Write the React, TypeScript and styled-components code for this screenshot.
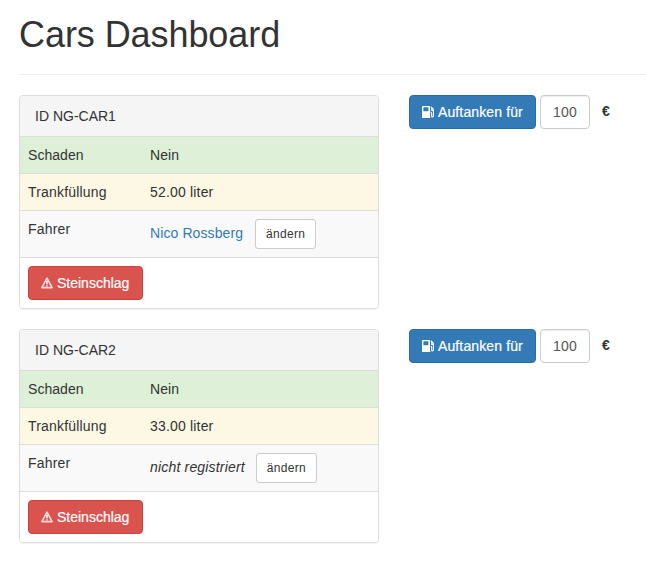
import React from 'react';
import styled, { createGlobalStyle, css } from 'styled-components';

const GlobalStyle = createGlobalStyle`
  *, *::before, *::after { box-sizing: border-box; }
  body {
    margin: 0;
    background: #fff;
    color: #333;
    font: 14px/20px "Liberation Sans", Arial, sans-serif;
    overflow: hidden;
  }
`;

const Page = styled.main`
  padding: 15px 0 0 19px;
`;

const PageHeader = styled.header`
  height: 60px;
  border-bottom: 1px solid #eee;
  margin-bottom: 20px;
`;

const Title = styled.h1`
  margin: 0;
  font-size: 36px;
  font-weight: 400;
  line-height: 40px;
  letter-spacing: -0.07px;
`;

const CarRow = styled.section`
  display: flex;
  align-items: flex-start;
  gap: 30px;
  margin-bottom: 20px;
`;

const Panel = styled.article`
  width: 360px;
  border: 1px solid #ddd;
  border-radius: 4px;
  box-shadow: 0 1px 1px rgba(0, 0, 0, 0.05);
  overflow: hidden;
`;

const PanelHeading = styled.div`
  height: 40px;
  padding: 10px 15px;
  background: #f5f5f5;
`;

type Tone = 'success' | 'warning' | 'striped' | 'plain';

const toneColor: Record<Tone, string> = {
  success: '#dff0d8',
  warning: '#fcf8e3',
  striped: '#f9f9f9',
  plain: '#fff',
};

const TableRow = styled.div<{ $tone: Tone }>`
  display: grid;
  grid-template-columns: 122px 1fr;
  padding: 8px;
  border-top: 1px solid #ddd;
  background: ${({ $tone }) => toneColor[$tone]};
  letter-spacing: ${({ $tone }) => ($tone === 'success' ? '0.05px' : '0.18px')};
`;

const DriverCell = styled.div`
  display: flex;
  align-items: center;
  height: 30px;
`;

const DriverLink = styled.a`
  margin: 0 12px 2px 0;
  color: #337ab7;
  text-decoration: none;
  letter-spacing: 0.1px;
`;

const Unregistered = styled.em`
  margin: 0 11px 2px 0;
  letter-spacing: 0.18px;
`;

const buttonText = css`
  font-family: inherit;
  white-space: nowrap;
  cursor: pointer;
`;

const SmallButton = styled.button`
  ${buttonText}
  width: 61px;
  height: 30px;
  padding: 0;
  border: 1px solid #ccc;
  border-radius: 3px;
  background: #fff;
  color: #333;
  font-size: 12px;
  letter-spacing: 0.3px;
`;

const ActionButton = styled.button<{ $kind: 'primary' | 'danger' }>`
  ${buttonText}
  display: flex;
  align-items: center;
  gap: 4px;
  width: ${({ $kind }) => ($kind === 'primary' ? 127 : 115)}px;
  height: 34px;
  padding: 0 12px;
  border: 1px solid ${({ $kind }) => ($kind === 'primary' ? '#2e6da4' : '#d43f3a')};
  border-radius: 4px;
  background: ${({ $kind }) => ($kind === 'primary' ? '#337ab7' : '#d9534f')};
  color: #fff;
  font-size: 14px;
  -webkit-text-stroke: 0.2px #fff;
  letter-spacing: ${({ $kind }) => ($kind === 'primary' ? 0.12 : 0)}px;

  svg {
    flex: none;
  }
`;

const RefuelForm = styled.div`
  display: flex;
  align-items: center;
`;

const AmountInput = styled.input`
  width: 50px;
  height: 34px;
  margin-left: 4px;
  padding: 6px 12px;
  border: 1px solid #ccc;
  border-radius: 4px;
  box-shadow: inset 0 1px 1px rgba(0, 0, 0, 0.075);
  background: #fff;
  color: #555;
  font: 14px/20px "Liberation Sans", Arial, sans-serif;
  letter-spacing: 0.2px;
`;

const Currency = styled.strong`
  margin: 0 0 2px 12px;
`;

const FuelIcon = () => (
  <svg width="12" height="12" viewBox="0 0 12 12" aria-hidden="true">
    <path
      fill="#fff"
      fillRule="evenodd"
      d="M1 0h6q1 0 1 1v10h.3v1H0V1Q0 0 1 0ZM1.4 1.3v3.9h5V1.3Z"
    />
    <path
      fill="none"
      stroke="#fff"
      strokeWidth="1.1"
      d="M8.8.6l2 2q.6.6.6 1.5v5.7q0 1.1-.9 1.1t-.9-1V7.2q0-.8-.9-.8M9.7 1.8v2.6h1.7"
    />
  </svg>
);

const WarningIcon = () => (
  <svg width="12" height="12" viewBox="0 0 12 12" aria-hidden="true">
    <path
      fill="none"
      stroke="#fff"
      strokeOpacity=".8"
      strokeWidth="1.6"
      strokeLinejoin="round"
      d="M6 1.2 11.1 10.6H.9Z"
    />
    <path fill="#fff" d="M5.1 3.8h1.8L6.6 7.6H5.4ZM5.3 8.2h1.4v1.3H5.3Z" />
  </svg>
);

interface Car {
  id: string;
  damage: string;
  fuel: string;
  driver?: string;
}

const cars: Car[] = [
  { id: 'NG-CAR1', damage: 'Nein', fuel: '52.00', driver: 'Nico Rossberg' },
  { id: 'NG-CAR2', damage: 'Nein', fuel: '33.00' },
];

const CarPanel = ({ car }: { car: Car }) => (
  <Panel>
    <PanelHeading>ID {car.id}</PanelHeading>
    <TableRow $tone="success">
      <span>Schaden</span>
      <span>{car.damage}</span>
    </TableRow>
    <TableRow $tone="warning">
      <span>Trankfüllung</span>
      <span>{car.fuel} liter</span>
    </TableRow>
    <TableRow $tone="striped">
      <span>Fahrer</span>
      <DriverCell>
        {car.driver ? (
          <DriverLink>{car.driver}</DriverLink>
        ) : (
          <Unregistered>nicht registriert</Unregistered>
        )}
        <SmallButton>ändern</SmallButton>
      </DriverCell>
    </TableRow>
    <TableRow $tone="plain">
      <ActionButton $kind="danger">
        <WarningIcon />
        Steinschlag
      </ActionButton>
    </TableRow>
  </Panel>
);

export default function App() {
  return (
    <>
      <GlobalStyle />
      <Page>
        <PageHeader>
          <Title>Cars Dashboard</Title>
        </PageHeader>
        {cars.map((car) => (
          <CarRow key={car.id}>
            <CarPanel car={car} />
            <RefuelForm>
              <ActionButton $kind="primary">
                <FuelIcon />
                Auftanken für
              </ActionButton>
              <AmountInput defaultValue="100" aria-label="Liter" />
              <Currency>€</Currency>
            </RefuelForm>
          </CarRow>
        ))}
      </Page>
    </>
  );
}
